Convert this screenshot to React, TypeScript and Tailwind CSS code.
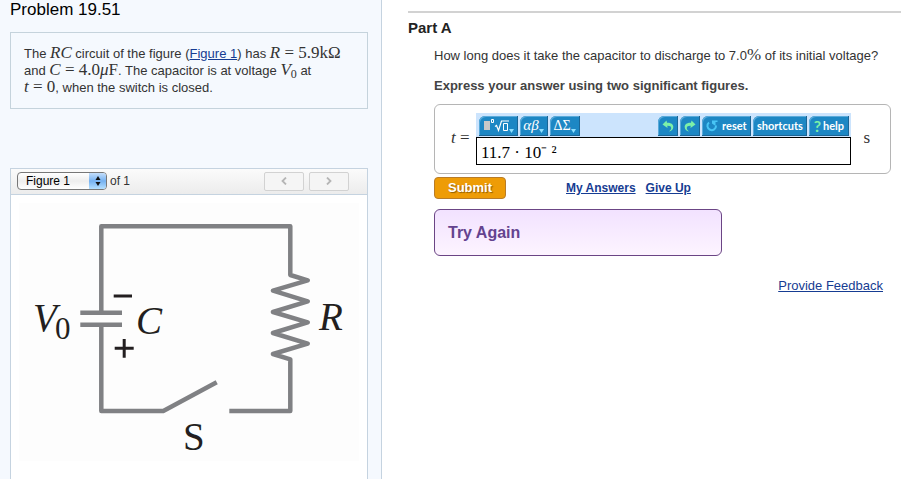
import { useState } from "react";
import type { ReactNode } from "react";

function MathText({ children, italic }: { children: ReactNode; italic?: boolean }) {
  return (
    <span
      className={
        italic
          ? "font-['Liberation_Serif',serif] text-[17px] leading-[0] italic"
          : "font-['Liberation_Serif',serif] text-[17px] leading-[0]"
      }
    >
      {children}
    </span>
  );
}

function ToolButton({ label, width, children }: { label: string; width: string; children: ReactNode }) {
  return (
    <button
      type="button"
      aria-label={label}
      className={`flex h-5 items-center justify-center rounded-tl-md border-r border-b border-[#1b6595] bg-[#1d87c4] font-['Lato',sans-serif] text-[11px] leading-none font-bold text-white shadow-[inset_1px_1px_0_#5aaada] ${width}`}
    >
      {children}
    </button>
  );
}

function Caret() {
  return (
    <svg className="mt-2.5 h-1 w-[5px] shrink-0" viewBox="0 0 5 4" aria-hidden="true">
      <path d="M0 0h5L2.500 4z" fill="#8fe0ff" />
    </svg>
  );
}

function CurvedArrow({ flip }: { flip?: boolean }) {
  return (
    <svg className={flip ? "h-3 w-3 -scale-x-100" : "h-3 w-3"} viewBox="0 0 12 12" aria-hidden="true">
      <path d="M.5 4.500 4.500 .5 5 2.800C8.800 2.600 11.300 4.200 11.300 7c0 2.600-1.900 4-4.300 4.500C8.500 10.300 9.200 9.200 9.200 8 9.200 6.300 7.800 5.600 5.300 5.700L5.500 8z" fill="#7df0a8" />
    </svg>
  );
}

function Circuit() {
  return (
    <svg className="block w-full" viewBox="0 0 356 270" role="img" aria-label="RC circuit with a switch">
      <rect x="8" y="8" width="340" height="258" fill="#fdfdfd" />
      <g fill="none" stroke="#808184" strokeWidth="4.500" strokeLinejoin="round">
        <path d="M90.300 117V31.300H279.300V80L296.700 85.300 262 95.700 296.700 106.300 262 117 296.700 127.300 262 138 296.700 148.700 262 159 279.300 164.300V216H218.300" />
        <path d="M90.300 130V216H152.300L205.700 187.300" />
        <path d="M69.300 117.700H111M69.300 129.700H111" />
      </g>
      <path d="M102.700 101H121M103.700 153.300H122.700M113.200 144V162.700" stroke="#231f20" strokeWidth="3" />
      <g fill="#231f20" className="font-['Liberation_Serif',serif]">
        <text x="22" y="136" fontSize="39">
          <tspan fontStyle="italic">V</tspan>
          <tspan x="44" y="144" fontSize="31">0</tspan>
        </text>
        <text x="125" y="139" fontSize="39" fontStyle="italic">C</text>
        <text x="308" y="135" fontSize="39" fontStyle="italic">R</text>
        <text x="172" y="255" fontSize="39">S</text>
      </g>
    </svg>
  );
}

export default function App() {
  const [answer, setAnswer] = useState("11.7 · 10⁻ ²");

  return (
    <div className="flex min-h-screen bg-white font-['Liberation_Sans',Arial,sans-serif] text-[13px] text-[#333]">
      {/* Problem statement and figure */}
      <aside className="flex w-[382px] shrink-0 flex-col border-r border-[#c5d3e0] bg-[#f5f9fe] pr-[13px] pl-2.5">
        <h1 className="text-[17px] leading-5 text-black">Problem 19.51</h1>

        <div className="mt-3 h-[77px] border border-[#c5d3dc] px-[13px] py-3">
          <p className="leading-[17px]">
            The <MathText italic>RC</MathText> circuit of the figure (
            <a href="#figure" className="text-[#163c92] underline">Figure 1</a>) has{" "}
            <MathText><i>R</i> = 5.9kΩ</MathText>
            <br />
            and <MathText><i>C</i> = 4.0<i>μ</i>F</MathText>. The capacitor is at voltage{" "}
            <MathText><i>V</i><sub className="text-xs leading-[0]">0</sub></MathText> at
            <br />
            <MathText><i>t</i> = 0</MathText>, when the switch is closed.
          </p>
        </div>

        <section id="figure" className="mt-[59px] flex-1 border border-b-0 border-[#c5d3e0] bg-white">
          <div className="flex h-[26px] items-center border-b border-[#c5d3e0] bg-linear-to-b from-[#fbfbfb] to-[#ececec] pr-[18px] pb-px pl-1.5">
            <div className="relative flex">
              <select
                aria-label="Figure"
                className="h-[18px] w-[90px] appearance-none rounded border border-[#777] bg-linear-to-b from-white via-[#eee] to-white pl-2 text-xs leading-4 text-black"
              >
                <option>Figure 1</option>
              </select>
              <span className="pointer-events-none absolute top-px right-px flex h-4 w-[17px] items-center justify-center rounded-r-[3px] bg-linear-to-b from-[#c4defa] via-[#75b1f0] to-[#b5e0ff]">
                <svg className="h-2.5 w-1.5" viewBox="0 0 6 10" aria-hidden="true">
                  <path d="M3 0 5.500 4H.5zM3 10 .5 6h5z" fill="#111" />
                </svg>
              </span>
            </div>
            <span className="ml-[3px] text-xs">of 1</span>
            <div className="ml-auto flex gap-[5px]">
              <button type="button" aria-label="Previous figure" className="flex h-[19px] w-10 items-center justify-center rounded-xs border border-[#d2d2d2] bg-[#f5f5f5]">
                <svg className="h-2 w-1.5" viewBox="0 0 6 8" fill="none" stroke="#b5b5b5" strokeWidth="1.800" aria-hidden="true">
                  <path d="M5 .5 1.500 4 5 7.500" />
                </svg>
              </button>
              <button type="button" aria-label="Next figure" className="flex h-[19px] w-10 items-center justify-center rounded-xs border border-[#d2d2d2] bg-[#f5f5f5]">
                <svg className="h-2 w-1.5" viewBox="0 0 6 8" fill="none" stroke="#b5b5b5" strokeWidth="1.800" aria-hidden="true">
                  <path d="M1 .5 4.500 4 1 7.500" />
                </svg>
              </button>
            </div>
          </div>
          <Circuit />
        </section>
      </aside>

      {/* Question part */}
      <main className="min-w-0 flex-1 pt-[11px] pl-[26px]">
        <div className="border-t-2 border-[#d2d2d2] pt-[5px]">
          <h2 className="text-[15px] leading-5 font-bold text-[#222]">Part A</h2>
        </div>

        <div className="mt-2.5 pr-2.5 pl-[26px]">
          <p className="leading-4">
            How long does it take the capacitor to discharge to 7.0<MathText>%</MathText> of its initial voltage?
          </p>
          <p className="mt-3.5 leading-4 font-bold text-[#444]">Express your answer using two significant figures.</p>

          <form onSubmit={(e) => e.preventDefault()}>
            <div className="mt-2.5 flex h-[70px] items-center rounded-md border border-[#b5b5b5] pr-5 pl-4">
              <label htmlFor="answer" className="w-[25px] shrink-0">
                <MathText><i>t</i> =</MathText>
              </label>
              <div className="min-w-0 flex-1">
                <div className="flex h-6 items-end justify-between bg-[#cce4fd] pr-0.5 pb-px pl-[3px]">
                  <div className="flex gap-0.5">
                    <ToolButton label="Templates" width="w-[39px]">
                      <svg className="h-[15px] w-[26px] shrink-0" viewBox="0 0 26 15" fill="none" stroke="#fff" aria-hidden="true">
                        <path d="M1 3h6v9H1z" fill="#c8c8c8" stroke="none" />
                        <path d="M8.500 1.500h2v3h-2zM20.500 5.500h4v7h-4z" />
                        <path d="M12 8.500 13.500 7.500 15.500 12.500 18.500 3H26" strokeWidth="1.200" />
                      </svg>
                      <Caret />
                    </ToolButton>
                    <ToolButton label="Greek letters" width="w-7">
                      <span className="font-['Liberation_Serif',serif] text-[15px] leading-none font-normal italic">αβ</span>
                      <Caret />
                    </ToolButton>
                    <ToolButton label="Symbols" width="w-[30px]">
                      <span className="font-['Liberation_Serif',serif] text-sm leading-none font-normal">ΔΣ</span>
                      <Caret />
                    </ToolButton>
                  </div>
                  <div className="flex gap-0.5">
                    <ToolButton label="Undo" width="w-5"><CurvedArrow /></ToolButton>
                    <ToolButton label="Redo" width="w-5"><CurvedArrow flip /></ToolButton>
                    <ToolButton label="Reset" width="w-[49px]">
                      <svg className="mr-1 h-3 w-3 shrink-0" viewBox="0 0 12 12" fill="none" aria-hidden="true">
                        <path d="M3 2.500A4.300 4.300 0 1 0 10 5.500" stroke="#48c5f5" strokeWidth="2" />
                        <path d="M6 .5h5.500V2H9.500V6L6 3.500z" fill="#48c5f5" />
                      </svg>
                      reset
                    </ToolButton>
                    <ToolButton label="Shortcuts" width="w-[54px]">shortcuts</ToolButton>
                    <ToolButton label="Help" width="w-10">
                      <span className="mr-0.5 text-base leading-none text-[#7df0a8]">?</span>
                      help
                    </ToolButton>
                  </div>
                </div>
                <input
                  id="answer"
                  type="text"
                  value={answer}
                  onChange={(e) => setAnswer(e.target.value)}
                  className="block h-7 w-full border border-black bg-white px-1 font-['Liberation_Serif',serif] text-[17px] text-black outline-none"
                />
              </div>
              <span className="ml-3"><MathText>s</MathText></span>
            </div>

            <div className="mt-[3px] flex items-center text-xs font-bold">
              <button type="submit" className="h-[22px] w-[72px] rounded border border-[#b87c28] bg-[#ee9c06] text-[13px] leading-4 text-white text-shadow-[1px_1px_1px_#0006]">
                Submit
              </button>
              <a href="#answers" className="ml-[60px] text-[#163c92] underline">My Answers</a>
              <a href="#give-up" className="ml-2.5 text-[#163c92] underline">Give Up</a>
            </div>
          </form>

          <div role="status" className="mt-2.5 flex h-[47px] w-72 max-w-full items-center rounded-md border border-[#6b4585] bg-linear-to-b from-[#f2e2ff] to-[#fdf4ff] px-[13px] text-base font-bold text-[#64438f]">
            Try Again
          </div>

          <div className="mt-[22px] pr-2 text-right leading-4">
            <a href="#feedback" className="text-[#163c92] underline">Provide Feedback</a>
          </div>
        </div>
      </main>
    </div>
  );
}
